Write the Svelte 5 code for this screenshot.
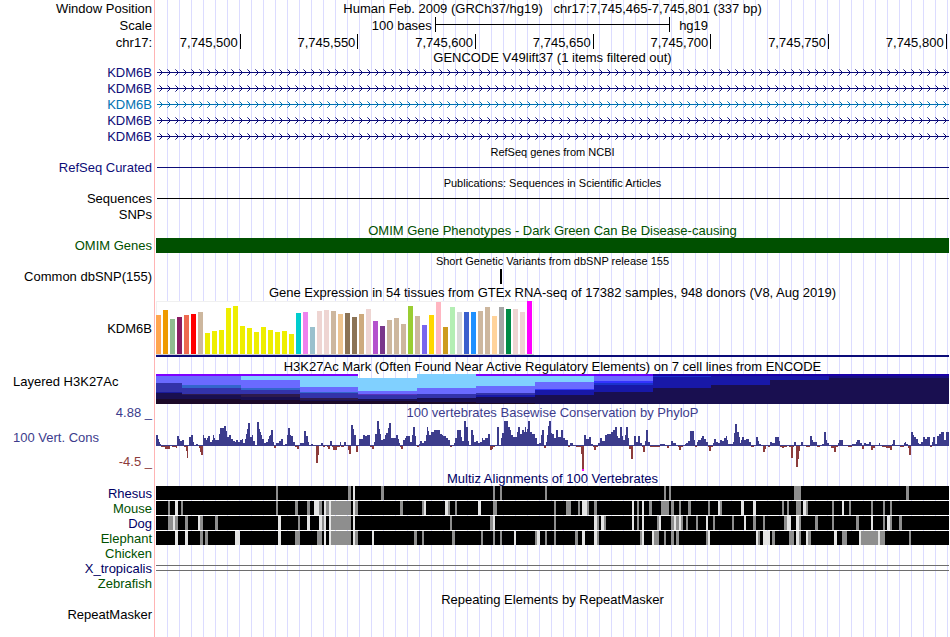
<script lang="ts">
  type Block = [x: number, width: number, shade: "g" | "l"];
  type Run = [x: number, height: number];

  // plot coordinates: one unit per pixel of the default image width
  const WIDTH = 793;

  const ticks = ["7,745,500", "7,745,550", "7,745,600", "7,745,650", "7,745,700", "7,745,750", "7,745,800"];

  const transcripts = ["navy", "navy", "blue", "navy", "navy"];

  const tissues: [number, string][] = [
    [39, "#ffa54f"], [44, "#ee9a00"], [35, "#8fbc8f"], [37, "#8b1c62"], [39, "#ee6a50"], [40, "#ff0000"],
    [42, "#cdb79e"], [21, "#eeee00"], [23, "#eeee00"], [24, "#eeee00"], [46, "#eeee00"], [48, "#eeee00"],
    [28, "#eeee00"], [26, "#eeee00"], [22, "#eeee00"], [27, "#eeee00"], [24, "#eeee00"], [22, "#eeee00"],
    [23, "#eeee00"], [20, "#eeee00"], [41, "#00cdcd"], [42, "#ee82ee"], [27, "#9ac0cd"], [43, "#eed5d2"],
    [44, "#eed5d2"], [43, "#cdb79e"], [40, "#eec591"], [41, "#8b7355"], [37, "#8b7355"], [40, "#cdaa7d"],
    [45, "#eed5d2"], [33, "#b452cd"], [28, "#7a378b"], [34, "#cdb79e"], [36, "#cdb79e"], [30, "#cdb79e"],
    [48, "#9acd32"], [38, "#cdb79e"], [29, "#7a67ee"], [39, "#ffd700"], [52, "#ffb6c1"], [27, "#cd9b1d"],
    [47, "#b4eeb4"], [42, "#d9d9d9"], [42, "#3a5fcd"], [42, "#1e90ff"], [43, "#cdb79e"], [47, "#cdb79e"],
    [38, "#ffd39b"], [47, "#a6a6a6"], [45, "#008b45"], [45, "#eed5d2"], [42, "#eed5d2"], [53, "#ff00ff"],
  ];

  // each column is a stack of [bottom, colour] from the top edge down
  const H3K_BOTTOM = 31;
  const h3k: { x: number; top?: number; bands: [number, string][] }[] = [
    { x: 0, bands: [[3, "#7f00ff"], [10, "#6a6aff"], [19, "#3333aa"], [20, "#1a1a99"], [26, "#190f50"], [31, "#1c0a28"]] },
    { x: 26, bands: [[3, "#7f00ff"], [12, "#6a6aff"], [15, "#3366cc"], [21, "#3333aa"], [22, "#2d1a4d"], [26, "#190f50"], [31, "#1c0a28"]] },
    { x: 85, bands: [[3, "#7f00ff"], [7, "#80d0ff"], [15, "#6a6aff"], [17, "#3366cc"], [21, "#3333aa"], [24, "#2d1a4d"], [27, "#190f50"], [31, "#1c0a28"]] },
    { x: 144, bands: [[3, "#7f00ff"], [14, "#80d0ff"], [19, "#6a6aff"], [20, "#3366cc"], [25, "#3333aa"], [27, "#2d1a4d"], [28, "#190f50"], [31, "#1c0a28"]] },
    { x: 202, top: 5, bands: [[18, "#80d0ff"], [21, "#6a6aff"], [22, "#5a33bb"], [26, "#3333aa"], [28, "#190f50"], [31, "#1c0a28"]] },
    { x: 261, bands: [[15, "#80d0ff"], [21, "#6a6aff"], [25, "#3333aa"], [29, "#190f50"], [31, "#1c0a28"]] },
    { x: 320, bands: [[3, "#7f00ff"], [13, "#80d0ff"], [20, "#6a6aff"], [22, "#3333aa"], [24, "#1818a8"], [30, "#190f50"], [31, "#1c0a28"]] },
    { x: 379, bands: [[3, "#7f00ff"], [9, "#80d0ff"], [16, "#6a6aff"], [17, "#3333ff"], [22, "#1818a8"], [31, "#190f50"]] },
    { x: 438, bands: [[3, "#6a00ff"], [8, "#6a6aff"], [10, "#3333ff"], [12, "#1a33cc"], [19, "#1818a8"], [31, "#190f50"]] },
    { x: 497, bands: [[3, "#1a00a8"], [4, "#1a33cc"], [15, "#1818a8"], [31, "#190f50"]] },
    { x: 555, bands: [[3, "#1a00a8"], [12, "#1818a8"], [31, "#190f50"]] },
    { x: 614, bands: [[3, "#1a00a8"], [7, "#1818a8"], [31, "#190f50"]] },
    { x: 673, bands: [[3, "#1a00a8"], [5, "#180f80"], [31, "#190f50"]] },
  ];

  const phyloP = parseRuns(`
    0,11 2,7 3,4 4,2 5,-1 9,-3 14,1 16,-1 20,-2 21,10 23,7 24,5 26,6 28,-1 30,-5 31,-12 32,0 33,9 35,11 37,4
    38,1 40,2 42,1 43,-2 44,-6 45,-9 47,11 48,8 50,6 51,8 52,10 54,4 56,6 57,11 58,8 59,6 63,12 64,18 68,20
    70,15 71,9 73,11 75,7 77,5 79,4 80,6 82,4 84,6 86,7 87,3 89,7 90,12 91,17 92,23 94,9 96,11 97,5 99,1
    101,24 103,17 104,14 105,11 106,7 108,3 110,4 112,7 113,10 114,11 115,16 117,4 118,-2 120,3 123,5 125,7
    127,1 129,2 131,11 132,18 134,11 135,10 137,4 139,-1 141,-3 143,1 144,3 148,15 150,10 152,4 153,1 155,2
    157,1 160,-17 162,-9 163,0 164,1 165,3 167,-1 169,1 171,-1 172,-3 174,5 176,-1 177,-4 181,-1 184,4
    185,-1 188,4 190,1 192,-4 193,-8 195,21 197,17 198,11 200,-6 202,0 203,7 207,11 209,10 211,11 214,-1
    216,-3 218,4 219,12 221,25 223,17 224,12 225,6 227,7 229,11 230,13 232,18 233,23 235,8 240,11 242,7
    243,3 244,-1 245,-3 247,6 249,8 250,10 254,4 256,11 257,19 259,10 260,1 261,-1 263,2 264,5 266,3 268,5
    270,11 271,19 272,15 273,11 275,14 278,16 284,12 286,11 287,10 290,8 292,6 294,-1 296,1 298,3 299,8
    301,16 305,9 306,5 308,25 310,19 312,5 313,1 315,16 317,11 318,4 320,5 322,3 324,4 326,8 327,6 329,8
    332,12 334,-4 336,-3 337,-1 339,1 341,19 343,1 344,0 345,8 346,13 348,25 352,19 354,16 355,11 357,9
    361,14 362,19 364,12 366,16 368,14 369,19 370,14 371,17 372,25 374,14 376,12 379,8 381,2 383,3 385,11
    386,16 388,-2 390,4 391,11 392,20 393,25 395,13 396,12 398,8 400,16 402,9 405,16 407,8 409,6 412,-1
    414,3 417,1 420,-1 425,-8 426,-25 428,11 430,7 433,9 435,2 437,-1 438,-4 440,-1 442,3 444,8 446,5
    449,11 451,12 455,14 457,16 459,19 461,10 462,8 464,19 466,10 467,6 469,11 470,19 472,8 473,-3 475,-13
    477,0 478,10 480,4 482,10 484,3 486,-1 487,-6 489,5 490,16 492,4 494,-1 504,2 509,1 511,-2 513,1 515,5
    517,3 520,1 522,-1 523,-4 525,-1 527,1 529,2 530,3 532,5 534,15 538,6 539,-1 541,4 542,6 545,8 546,10
    548,7 550,4 552,-1 553,-5 555,-1 557,3 558,7 560,4 562,3 564,6 566,5 568,8 570,10 571,6 572,2 577,4
    578,13 579,22 581,14 583,9 584,3 585,6 586,9 588,6 590,7 593,4 595,-1 598,1 600,9 602,5 603,2 605,1
    607,-6 609,-3 610,1 612,-1 614,4 616,3 619,9 623,5 624,-1 626,-2 628,-1 631,1 633,-1 635,-12 637,-1
    638,4 640,-21 642,-13 643,-5 644,1 645,4 647,1 650,-1 654,10 656,6 657,4 661,-1 664,1 666,2 668,14
    670,6 671,3 673,1 675,-2 678,-6 680,-1 682,3 683,6 687,1 692,-1 696,2 700,4 701,6 704,3 706,-3 708,3
    710,2 713,4 715,-4 717,-2 719,1 723,3 724,1 726,-1 730,-2 734,-4 736,2 737,6 739,1 744,-1 748,3 749,4
    750,2 752,-2 753,-9 755,14 757,11 758,9 760,7 762,3 763,2 765,4 767,9 769,7 771,9 774,-1 776,4 777,9
    779,2 781,10 783,12 785,14 788,6 790,14
  `);

  const alignments: { name: string; tone: string; blocks: Block[] }[] = [
    {
      name: "Rhesus",
      tone: "deep",
      blocks: parseBlocks("120,2,g 192,3,g 197,2,l 225,3,g 337,2,g 344,2,g 389,2,g 508,2,g 513,2,g 638,7,g 750,3,g"),
    },
    {
      name: "Mouse",
      tone: "green",
      blocks: parseBlocks(`
        12,2,g 19,3,l 25,2,g 120,2,g 139,3,g 151,3,g 158,5,l 163,3,g 168,2,l 170,3,g 173,2,l 175,20,g 197,2,l
        199,3,g 244,3,g 266,2,g 268,2,l 289,3,l 292,2,g 299,2,g 322,3,l 337,4,g 398,2,g 410,5,g 422,2,g
        426,5,l 431,2,g 438,3,g 476,2,l 481,2,g 486,2,l 493,3,g 505,8,g 515,3,g 523,2,g 532,3,g 552,2,g
        562,2,l 564,2,g 585,3,l 597,3,l 626,2,g 631,2,g 640,5,g 647,3,l 650,2,g 676,2,g 686,2,l 693,2,g
        715,2,g 727,2,g 734,2,g
      `),
    },
    {
      name: "Dog",
      tone: "deep",
      blocks: parseBlocks(`
        12,5,g 17,2,l 19,3,g 29,3,g 42,2,l 44,3,g 59,3,g 122,3,l 142,2,g 151,3,l 163,3,l 166,2,g 168,2,l
        173,2,l 175,20,g 197,2,l 294,2,g 334,3,g 337,2,l 398,2,g 438,3,l 441,2,g 445,3,l 448,2,g 476,2,l
        481,2,g 486,2,l 501,2,g 503,2,l 515,3,g 518,2,l 520,3,g 523,2,l 525,2,g 530,2,g 540,2,g 550,2,l
        557,2,g 576,2,g 588,2,l 597,3,g 607,2,g 628,3,g 631,4,l 640,3,l 643,2,g 659,3,g 676,2,g 700,3,g
        715,2,l 727,2,g 731,3,l 734,2,g 743,3,g
      `),
    },
    {
      name: "Elephant",
      tone: "green",
      blocks: parseBlocks(`
        19,3,l 29,3,l 44,3,g 49,3,g 79,5,l 122,3,l 139,5,g 161,5,g 168,2,l 173,2,l 175,20,g 197,2,l 199,3,g
        216,2,l 258,3,g 266,2,g 296,3,g 325,2,g 337,2,g 344,2,g 358,2,l 379,2,g 381,3,l 389,2,g 398,2,g
        419,3,g 426,3,l 438,3,l 441,2,g 484,2,g 486,2,l 496,2,l 498,5,g 508,2,g 515,3,g 520,3,g 550,2,g
        552,2,l 600,2,l 602,2,g 607,7,l 616,3,g 633,5,g 640,3,l 643,2,g 650,2,l 652,3,g 678,3,l 686,5,g
        703,2,l 705,17,g 722,2,l 724,5,g 753,2,g
      `),
    },
  ];

  function parseRuns(text: string): Run[] {
    return text.trim().split(/\s+/).map((p) => p.split(",").map(Number) as Run);
  }

  function parseBlocks(text: string): Block[] {
    return text.trim().split(/\s+/).map((p) => {
      const [x, width, shade] = p.split(",");
      return [Number(x), Number(width), shade as "g" | "l"];
    });
  }

  function nextX(list: { x: number }[], i: number): number {
    return i + 1 < list.length ? list[i + 1].x : WIDTH;
  }

  // filled step outline of the scores on one side of the baseline
  function wiggle(runs: Run[], sign: 1 | -1, base: number): string {
    return runs
      .map(([x, h], i) => {
        const end = i + 1 < runs.length ? runs[i + 1][0] : WIDTH;
        return h * sign > 0 ? `M${x} ${base}V${base - h}H${end}V${base}Z` : "";
      })
      .join("");
  }
</script>

{#snippet caption(text: string, tone = "", small = false, label = "")}
  <div class="row caption">
    <div class="label {tone}">{label}</div>
    <h2 class={tone} class:small>{text}</h2>
  </div>
{/snippet}

<main class="browser">
  <div class="row header">
    <div class="label">Window Position</div>
    <h1>Human Feb. 2009 (GRCh37/hg19)&nbsp;&nbsp; chr17:7,745,465-7,745,801 (337 bp)</h1>
  </div>
  <div class="row header">
    <div class="label">Scale</div>
    <div class="scale">
      <span class="bases">100 bases</span>
      <span class="ruler"></span>
      <span class="assembly">hg19</span>
    </div>
  </div>
  <div class="row positions">
    <div class="label">chr17:</div>
    <div class="ticks">
      {#each ticks as tick (tick)}
        <span class="tick">{tick}</span>
      {/each}
    </div>
  </div>

  {@render caption("GENCODE V49lift37 (1 items filtered out)")}
  {#each transcripts as tone, i}
    <div class="row item">
      <div class="label {tone}">KDM6B</div>
      <svg class="plot {tone}" height="16" shape-rendering="crispEdges" aria-hidden="true">
        <defs>
          <pattern id="strand-{i}" width="8" height="16" patternUnits="userSpaceOnUse">
            <path
              d="M4 6h1v1h-1zM5 7h1v1h-1zM6 8h1v1h-1zM5 9h1v1h-1zM4 10h1v1h-1z"
              fill="currentColor"
            />
            <path d="M3 5h1v1h-1zM3 11h1v1h-1z" fill="currentColor" opacity="0.6" />
          </pattern>
        </defs>
        <rect width="100%" height="16" fill="url(#strand-{i})" />
        <rect x="1" y="8" width="100%" height="1" fill="currentColor" />
      </svg>
    </div>
  {/each}

  {@render caption("RefSeq genes from NCBI", "", true)}
  <div class="row item">
    <div class="label navy">RefSeq Curated</div>
    <div class="span navy"></div>
  </div>

  {@render caption("Publications: Sequences in Scientific Articles", "", true)}
  <div class="row item">
    <div class="label">Sequences</div>
    <div class="span"></div>
  </div>
  <div class="row item">
    <div class="label">SNPs</div>
  </div>

  {@render caption("OMIM Gene Phenotypes - Dark Green Can Be Disease-causing", "green")}
  <div class="row item">
    <div class="label green">OMIM Genes</div>
    <div class="omim"></div>
  </div>

  {@render caption("Short Genetic Variants from dbSNP release 155", "", true)}
  <div class="row item">
    <div class="label">Common dbSNP(155)</div>
    <svg class="plot" viewBox="0 0 {WIDTH} 16" height="16" preserveAspectRatio="none" aria-hidden="true">
      <rect x="344" y="1" width="2" height="15" />
    </svg>
  </div>

  {@render caption("Gene Expression in 54 tissues from GTEx RNA-seq of 17382 samples, 948 donors (V8, Aug 2019)")}
  <div class="row gtex">
    <div class="label">KDM6B</div>
    <svg
      class="plot"
      viewBox="0 0 {WIDTH} 59"
      height="59"
      preserveAspectRatio="none"
      shape-rendering="crispEdges"
      aria-hidden="true"
    >
      <rect x="0" y="2" width="378" height="54" fill="#f0f0f0" />
      <rect x="1" y="3" width="376" height="52" fill="#fff" />
      {#each tissues as [height, color], i}
        <rect x={i * 7} y={55 - height} width="5" {height} fill={color} />
      {/each}
      <rect x="0" y="55" width="378" height="1" fill="#d0d0d0" />
      <rect x="0" y="56" width={WIDTH} height="2" fill="#0c0c78" />
    </svg>
  </div>

  {@render caption("H3K27Ac Mark (Often Found Near Active Regulatory Elements) on 7 cell lines from ENCODE")}
  <div class="row h3k">
    <div class="label start">Layered H3K27Ac</div>
    <svg
      class="plot"
      viewBox="0 0 {WIDTH} {H3K_BOTTOM}"
      height={H3K_BOTTOM}
      preserveAspectRatio="none"
      shape-rendering="crispEdges"
      aria-hidden="true"
    >
      {#each h3k as column, i}
        {#each column.bands as [bottom, color], j}
          {@const top = j === 0 ? (column.top ?? 1) : column.bands[j - 1][0]}
          <rect x={column.x} y={top} width={nextX(h3k, i) - column.x} height={bottom - top} fill={color} />
        {/each}
      {/each}
    </svg>
  </div>

  {@render caption("100 vertebrates Basewise Conservation by PhyloP", "indigo", false, "4.88 _")}
  <div class="row phylop">
    <div class="label range">
      <span class="start indigo">100 Vert. Cons</span>
      <span class="maroon">-4.5 _</span>
    </div>
    <svg
      class="plot"
      viewBox="0 0 {WIDTH} 51"
      height="51"
      preserveAspectRatio="none"
      shape-rendering="crispEdges"
      aria-hidden="true"
    >
      <rect y="26" width={WIDTH} height="1" fill="#3c3c8c" />
      <path d={wiggle(phyloP, 1, 27)} fill="#3c3c8c" />
      <path d={wiggle(phyloP, -1, 27)} fill="#8c3c3c" />
      <rect x="426" y="50" width="2" height="2" fill="#ff00ff" />
    </svg>
  </div>

  {@render caption("Multiz Alignments of 100 Vertebrates", "deep")}
  <div class="alignments">
    {#each alignments as species (species.name)}
      <div class="row species">
        <div class="label {species.tone}">{species.name}</div>
        <svg
          class="plot"
          viewBox="0 0 {WIDTH} 14"
          height="14"
          preserveAspectRatio="none"
          shape-rendering="crispEdges"
          aria-hidden="true"
        >
          <rect width={WIDTH} height="14" />
          {#each species.blocks as [x, width, shade]}
            <rect {x} {width} height="14" fill={shade === "g" ? "#8e8e8e" : "#e4e4e4"} />
          {/each}
        </svg>
      </div>
    {/each}
    <div class="row species">
      <div class="label green">Chicken</div>
    </div>
    <div class="row species">
      <div class="label deep">X_tropicalis</div>
      <div class="gap"></div>
    </div>
    <div class="row species">
      <div class="label green">Zebrafish</div>
    </div>
  </div>

  {@render caption("Repeating Elements by RepeatMasker")}
  <div class="row item">
    <div class="label">RepeatMasker</div>
  </div>
</main>

<style>
  :global(body) {
    margin: 0;
    background: #fff;
  }

  .browser {
    min-height: 100vh;
    box-sizing: border-box;
    padding-right: 1px;
    overflow: hidden;
    font-family: "Liberation Sans", Arial, Helvetica, sans-serif;
    font-size: 13px;
    line-height: 17px;
    color: #000;
    /* label gutter with its divider, then the guide lines */
    background:
      linear-gradient(to right, #fff 154px, #ffb4b4 154px 155px, #fff 155px 156px, transparent 156px),
      repeating-linear-gradient(to right, transparent 0 11px, #dcdcff 11px 12px);
  }

  .row {
    display: grid;
    grid-template-columns: 156px minmax(0, 1fr);
  }

  .label {
    padding-right: 4px;
    text-align: right;
    white-space: nowrap;
  }

  .label.start {
    padding-left: 13px;
    text-align: left;
  }

  h1,
  h2 {
    margin: 0;
    font-size: 13px;
    font-weight: normal;
    text-align: center;
    white-space: nowrap;
  }

  h2.small {
    font-size: 11px;
  }

  .plot {
    display: block;
    width: 100%;
    overflow: visible;
  }

  .header {
    height: 17px;
  }

  .positions,
  .caption {
    height: 15px;
  }

  .item {
    height: 16px;
  }

  .item .plot {
    overflow: hidden;
  }

  .scale {
    display: grid;
    grid-template-columns: 237fr 200fr 237fr;
  }

  .bases {
    padding-right: 3px;
    text-align: right;
  }

  .ruler {
    height: 15px;
    border: solid #000;
    border-width: 0 1px;
    background: linear-gradient(#000, #000) center / 100% 1px no-repeat;
  }

  .assembly {
    padding-left: 9px;
  }

  /* columns are in bases: the window starts 36 bases before the first tick */
  .ticks {
    display: grid;
    grid-template-columns: 36fr repeat(6, 50fr) 1fr;
  }

  .tick {
    height: 15px;
    padding-right: 2px;
    border-right: 1px solid #000;
    text-align: right;
  }

  .span {
    height: 1px;
    margin: 8px 0 0 1px;
    background: currentColor;
  }

  .omim {
    height: 15px;
    margin-top: 1px;
    background: #005000;
  }

  .gtex {
    height: 59px;
    align-items: center;
  }

  .h3k {
    height: 31px;
  }

  .phylop {
    height: 51px;
  }

  .range {
    display: flex;
    flex-direction: column;
    justify-content: space-between;
    padding-top: 10px;
  }

  .range .start {
    padding-left: 13px;
    text-align: left;
  }

  .alignments {
    padding-top: 1px;
  }

  .species {
    height: 15px;
    line-height: 15px;
  }

  .gap {
    height: 4px;
    margin-top: 4px;
    border: solid #6e6e6e;
    border-width: 1px 0;
  }

  .navy {
    color: #0c0c78;
  }

  .blue {
    color: #0072b2;
  }

  .green {
    color: #005000;
  }

  .deep {
    color: #000064;
  }

  .indigo {
    color: #3c3c8c;
  }

  .maroon {
    color: #8c3c3c;
  }
</style>
